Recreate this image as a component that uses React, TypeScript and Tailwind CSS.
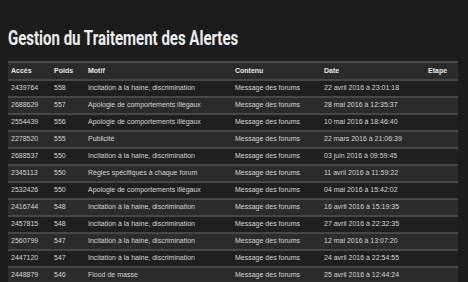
import React from 'react';

interface Alerte {
  acces: string;
  poids: string;
  motif: string;
  contenu: string;
  date: string;
}

const HAINE = 'Incitation à la haine, discrimination';
const APOLOGIE = 'Apologie de comportements illégaux';
const FORUMS = 'Message des forums';

const alertes: Alerte[] = [
  { acces: '2439764', poids: '558', motif: HAINE, contenu: FORUMS, date: '22 avril 2016 à 23:01:18' },
  { acces: '2688629', poids: '557', motif: APOLOGIE, contenu: FORUMS, date: '28 mai 2016 à 12:35:37' },
  { acces: '2554439', poids: '556', motif: APOLOGIE, contenu: FORUMS, date: '10 mai 2016 à 18:46:40' },
  { acces: '2278520', poids: '555', motif: 'Publicité', contenu: FORUMS, date: '22 mars 2016 à 21:06:39' },
  { acces: '2688537', poids: '550', motif: HAINE, contenu: FORUMS, date: '03 juin 2016 à 09:59:45' },
  { acces: '2345113', poids: '550', motif: 'Règles spécifiques à chaque forum', contenu: FORUMS, date: '11 avril 2016 à 11:59:22' },
  { acces: '2532426', poids: '550', motif: APOLOGIE, contenu: FORUMS, date: '04 mai 2016 à 15:42:02' },
  { acces: '2416744', poids: '548', motif: HAINE, contenu: FORUMS, date: '16 avril 2016 à 15:19:35' },
  { acces: '2457815', poids: '548', motif: HAINE, contenu: FORUMS, date: '27 avril 2016 à 22:32:35' },
  { acces: '2560799', poids: '547', motif: HAINE, contenu: FORUMS, date: '12 mai 2016 à 13:07:20' },
  { acces: '2447120', poids: '547', motif: HAINE, contenu: FORUMS, date: '24 avril 2016 à 22:54:55' },
  { acces: '2448879', poids: '546', motif: 'Flood de masse', contenu: FORUMS, date: '25 avril 2016 à 12:44:24' },
];

const cols = 'grid grid-cols-[43px_34px_147px_89px_104px_33px] items-center';

const App: React.FC = () => {
  return (
    <div className="w-[468px] h-[282px] overflow-hidden bg-[#1c1c1c] font-['Liberation_Sans',Arial,sans-serif]">
      <h1 className="pt-[26px] pl-[8px] h-[61px] text-[20px] leading-[24px] font-bold text-[#ececec] font-['Roboto',sans-serif] whitespace-nowrap">
        <span className="inline-block origin-left scale-x-[0.75]">Gestion du Traitement des Alertes</span>
      </h1>
      <div className="ml-[8px] w-[450px]">
        <div className={`${cols} h-[18px] bg-[#2a2a2a] border-t-2 border-[#4a4a4a] text-[7px] font-bold text-[#e6e6e6]`}>
          <div className="pl-[3px]">Accès</div>
          <div className="pl-[3px]">Poids</div>
          <div className="pl-[3px]">Motif</div>
          <div className="pl-[3px]">Contenu</div>
          <div className="pl-[3px]">Date</div>
          <div className="pl-[3px]">Etape</div>
        </div>
        {alertes.map((a, i) => (
          <div
            key={a.acces}
            className={`${cols} h-[17px] border-t-2 border-[#474747] text-[7px] text-[#d4d4d4] ${i % 2 === 0 ? 'bg-[#1f1f1f]' : 'bg-[#2b2b2b]'}`}
          >
            <div className="pl-[3px]">{a.acces}</div>
            <div className="pl-[3px]">{a.poids}</div>
            <div className="pl-[3px] whitespace-nowrap">{a.motif}</div>
            <div className="pl-[3px] whitespace-nowrap">{a.contenu}</div>
            <div className="pl-[3px] whitespace-nowrap">{a.date}</div>
            <div className="pl-[3px]"></div>
          </div>
        ))}
      </div>
    </div>
  );
};

export default App;
